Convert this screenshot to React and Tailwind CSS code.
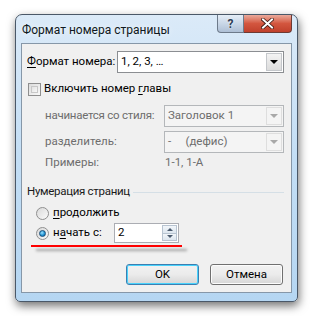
const font = { fontFamily: 'Roboto, "Liberation Sans", Arial, sans-serif' }

function Combo({ value, disabled, width }) {
  return (
    <div
      className={`flex h-[22px] items-stretch border ${disabled ? 'border-[#b4b7ba] bg-[#f4f4f4] text-[#6d6d6d]' : 'border-[#8b8e92] bg-white text-black'}`}
      style={{ width }}
    >
      <div className="flex flex-1 items-center pl-[3px] whitespace-pre">{value}</div>
      <div
        className={`m-px flex w-[16px] items-center justify-center border ${disabled ? 'border-[#dedede] bg-[#f4f4f4]' : 'border-[#c4c7cb] bg-gradient-to-b from-[#f3f3f3] to-[#dcdcdc]'}`}
      >
        <div
          className={`h-0 w-0 border-x-[4px] border-t-[4px] border-x-transparent ${disabled ? 'border-t-[#a8a8a8]' : 'border-t-black'}`}
        />
      </div>
    </div>
  )
}

function Radio({ checked }) {
  return (
    <div className="flex h-[13px] w-[13px] shrink-0 items-center justify-center rounded-full border border-[#8f8f8f] bg-gradient-to-br from-[#d9d9d9] to-[#fbfbfb]">
      {checked && (
        <div className="h-[7px] w-[7px] rounded-full border border-[#1a4f7a] bg-[radial-gradient(circle_at_40%_35%,#9ee2ff,#1b8fd0_60%,#0d5d97)]" />
      )}
    </div>
  )
}

export default function App() {
  return (
    <div className="h-[316px] w-[314px] whitespace-nowrap bg-white pl-[15px] pt-[14px] text-[11.5px] leading-none" style={font}>
      <div className="flex h-[288px] w-[283px] flex-col rounded-t-[7px] rounded-b-[5px] border border-[#4a5868] bg-gradient-to-b from-[#dbeaf8] via-[#c3def5] to-[#b5d6f2] shadow-[1px_4px_10px_rgba(0,0,0,0.55)]">
        {/* Title bar */}
        <div className="flex h-[28px] shrink-0 items-start">
          <div className="flex h-full flex-1 items-center pl-[6px] pt-[1px] text-[12px] text-[#101820] [text-shadow:0_0_6px_rgba(255,255,255,0.9)]">
            Формат номера страницы
          </div>
          <div className="mr-[5px] flex">
            <div className="flex h-[18px] w-[27px] items-center justify-center rounded-bl-[4px] border border-t-0 border-[#6d7a8a] bg-gradient-to-b from-[#e5edf6] via-[#c9d7e7] to-[#aebfd5] text-[12px] font-bold text-[#2d3e55] [text-shadow:0_0_2px_white]">
              ?
            </div>
            <div className="flex h-[18px] w-[48px] items-center justify-center rounded-br-[4px] border border-l-0 border-t-0 border-[#6d3a33] bg-gradient-to-b from-[#e9a99b] via-[#d3563f] to-[#c0402c]">
              <svg width="13" height="11" viewBox="0 0 13 11">
                <path d="M2 1.5 L11 9.5 M11 1.5 L2 9.5" stroke="#3a1712" strokeWidth="3.6" strokeLinecap="square" />
                <path d="M2 1.5 L11 9.5 M11 1.5 L2 9.5" stroke="#ffffff" strokeWidth="2" strokeLinecap="square" />
              </svg>
            </div>
          </div>
        </div>

        {/* Client area */}
        <div className="mx-[5px] flex h-[250px] w-[271px] shrink-0 flex-col border border-[#8697a8] bg-[#f0f0f0] text-black">
          <div className="mt-[7px] flex h-[22px] shrink-0 items-center pl-[5px]">
            <div className="w-[90px]"><span className="underline underline-offset-2">Ф</span>ормат номера:</div>
            <Combo value="1, 2, 3, …" width={167} />
          </div>

          <div className="mt-[5px] flex h-[22px] shrink-0 items-center pl-[6px]">
            <div className="h-[13px] w-[13px] border border-[#8f8f8f] bg-gradient-to-br from-[#dcdcdc] to-[#fafafa] p-[2px]">
              <div className="h-full w-full border border-[#c8c8c8] bg-gradient-to-br from-[#e3e3e3] to-[#f7f7f7]" />
            </div>
            <div className="ml-[3px]">Включить номер <span className="underline underline-offset-2">г</span>лавы</div>
          </div>

          <div className="mt-[5px] flex h-[22px] shrink-0 items-center pl-[23px] text-[#6d6d6d]">
            <div className="w-[119px] tracking-[-0.25px]">начинается со стиля:</div>
            <Combo value="Заголовок 1" width={120} disabled />
          </div>

          <div className="mt-[4px] flex h-[22px] shrink-0 items-center pl-[23px] text-[#6d6d6d]">
            <div className="w-[119px]">разделитель:</div>
            <Combo value={'-     (дефис)'} width={120} disabled />
          </div>

          <div className="flex h-[20px] shrink-0 items-center pl-[23px] text-[#6d6d6d]">
            <div className="w-[120px]">Примеры:</div>
            <div>1-1, 1-A</div>
          </div>

          <div className="mt-[9px] flex h-[20px] shrink-0 items-center pl-[5px]">
            <div className="w-[106px] tracking-[-0.3px] text-[#1a1a1a]">Нумерация страниц</div>
            <div className="mr-[7px] h-px flex-1 bg-[#d5dfe6]" />
          </div>

          <div className="mt-px flex h-[20px] shrink-0 items-center pl-[14px]">
            <Radio />
            <div className="ml-[4px]"><span className="underline underline-offset-2">п</span>родолжить</div>
          </div>

          <div className="flex h-[20px] shrink-0 items-center pl-[14px]">
            <Radio checked />
            <div className="ml-[4px] w-[61px]">н<span className="underline underline-offset-2">а</span>чать с:</div>
            <div className="flex h-[20px] w-[65px] border border-[#abadb3] bg-white">
              <div className="flex flex-1 items-center pl-[3px]">2</div>
              <div className="m-px flex w-[15px] flex-col">
                <div className="flex flex-1 items-center justify-center border border-[#b8c4d1] bg-gradient-to-b from-[#f2f6fa] to-[#dde6ef]">
                  <div className="h-0 w-0 border-x-[3px] border-b-[3px] border-x-transparent border-b-[#4a5a6e]" />
                </div>
                <div className="flex flex-1 items-center justify-center border border-t-0 border-[#b8c4d1] bg-gradient-to-b from-[#f2f6fa] to-[#dde6ef]">
                  <div className="h-0 w-0 border-x-[3px] border-t-[3px] border-x-transparent border-t-[#4a5a6e]" />
                </div>
              </div>
            </div>
          </div>

          <div className="ml-[9px] mt-[2px] h-[2px] w-[151px] shrink-0 bg-[#ff0000] shadow-[5px_4px_3px_rgba(0,0,0,0.35)]" />

          <div className="mt-[17px] flex shrink-0 justify-end gap-[11px] pr-[8px]">
            <div className="flex h-[21px] w-[73px] items-center justify-center rounded-[3px] border border-[#3c7fb1] bg-gradient-to-b from-[#f2f2f2] via-[#ebebeb] to-[#d6d6d6] shadow-[inset_0_0_0_1px_#48d2fc]">
              OK
            </div>
            <div className="flex h-[21px] w-[73px] items-center justify-center rounded-[3px] border border-[#707070] bg-gradient-to-b from-[#f2f2f2] via-[#ebebeb] to-[#d6d6d6] shadow-[inset_0_0_0_1px_#fcfcfc]">
              Отмена
            </div>
          </div>
        </div>
      </div>
    </div>
  )
}
